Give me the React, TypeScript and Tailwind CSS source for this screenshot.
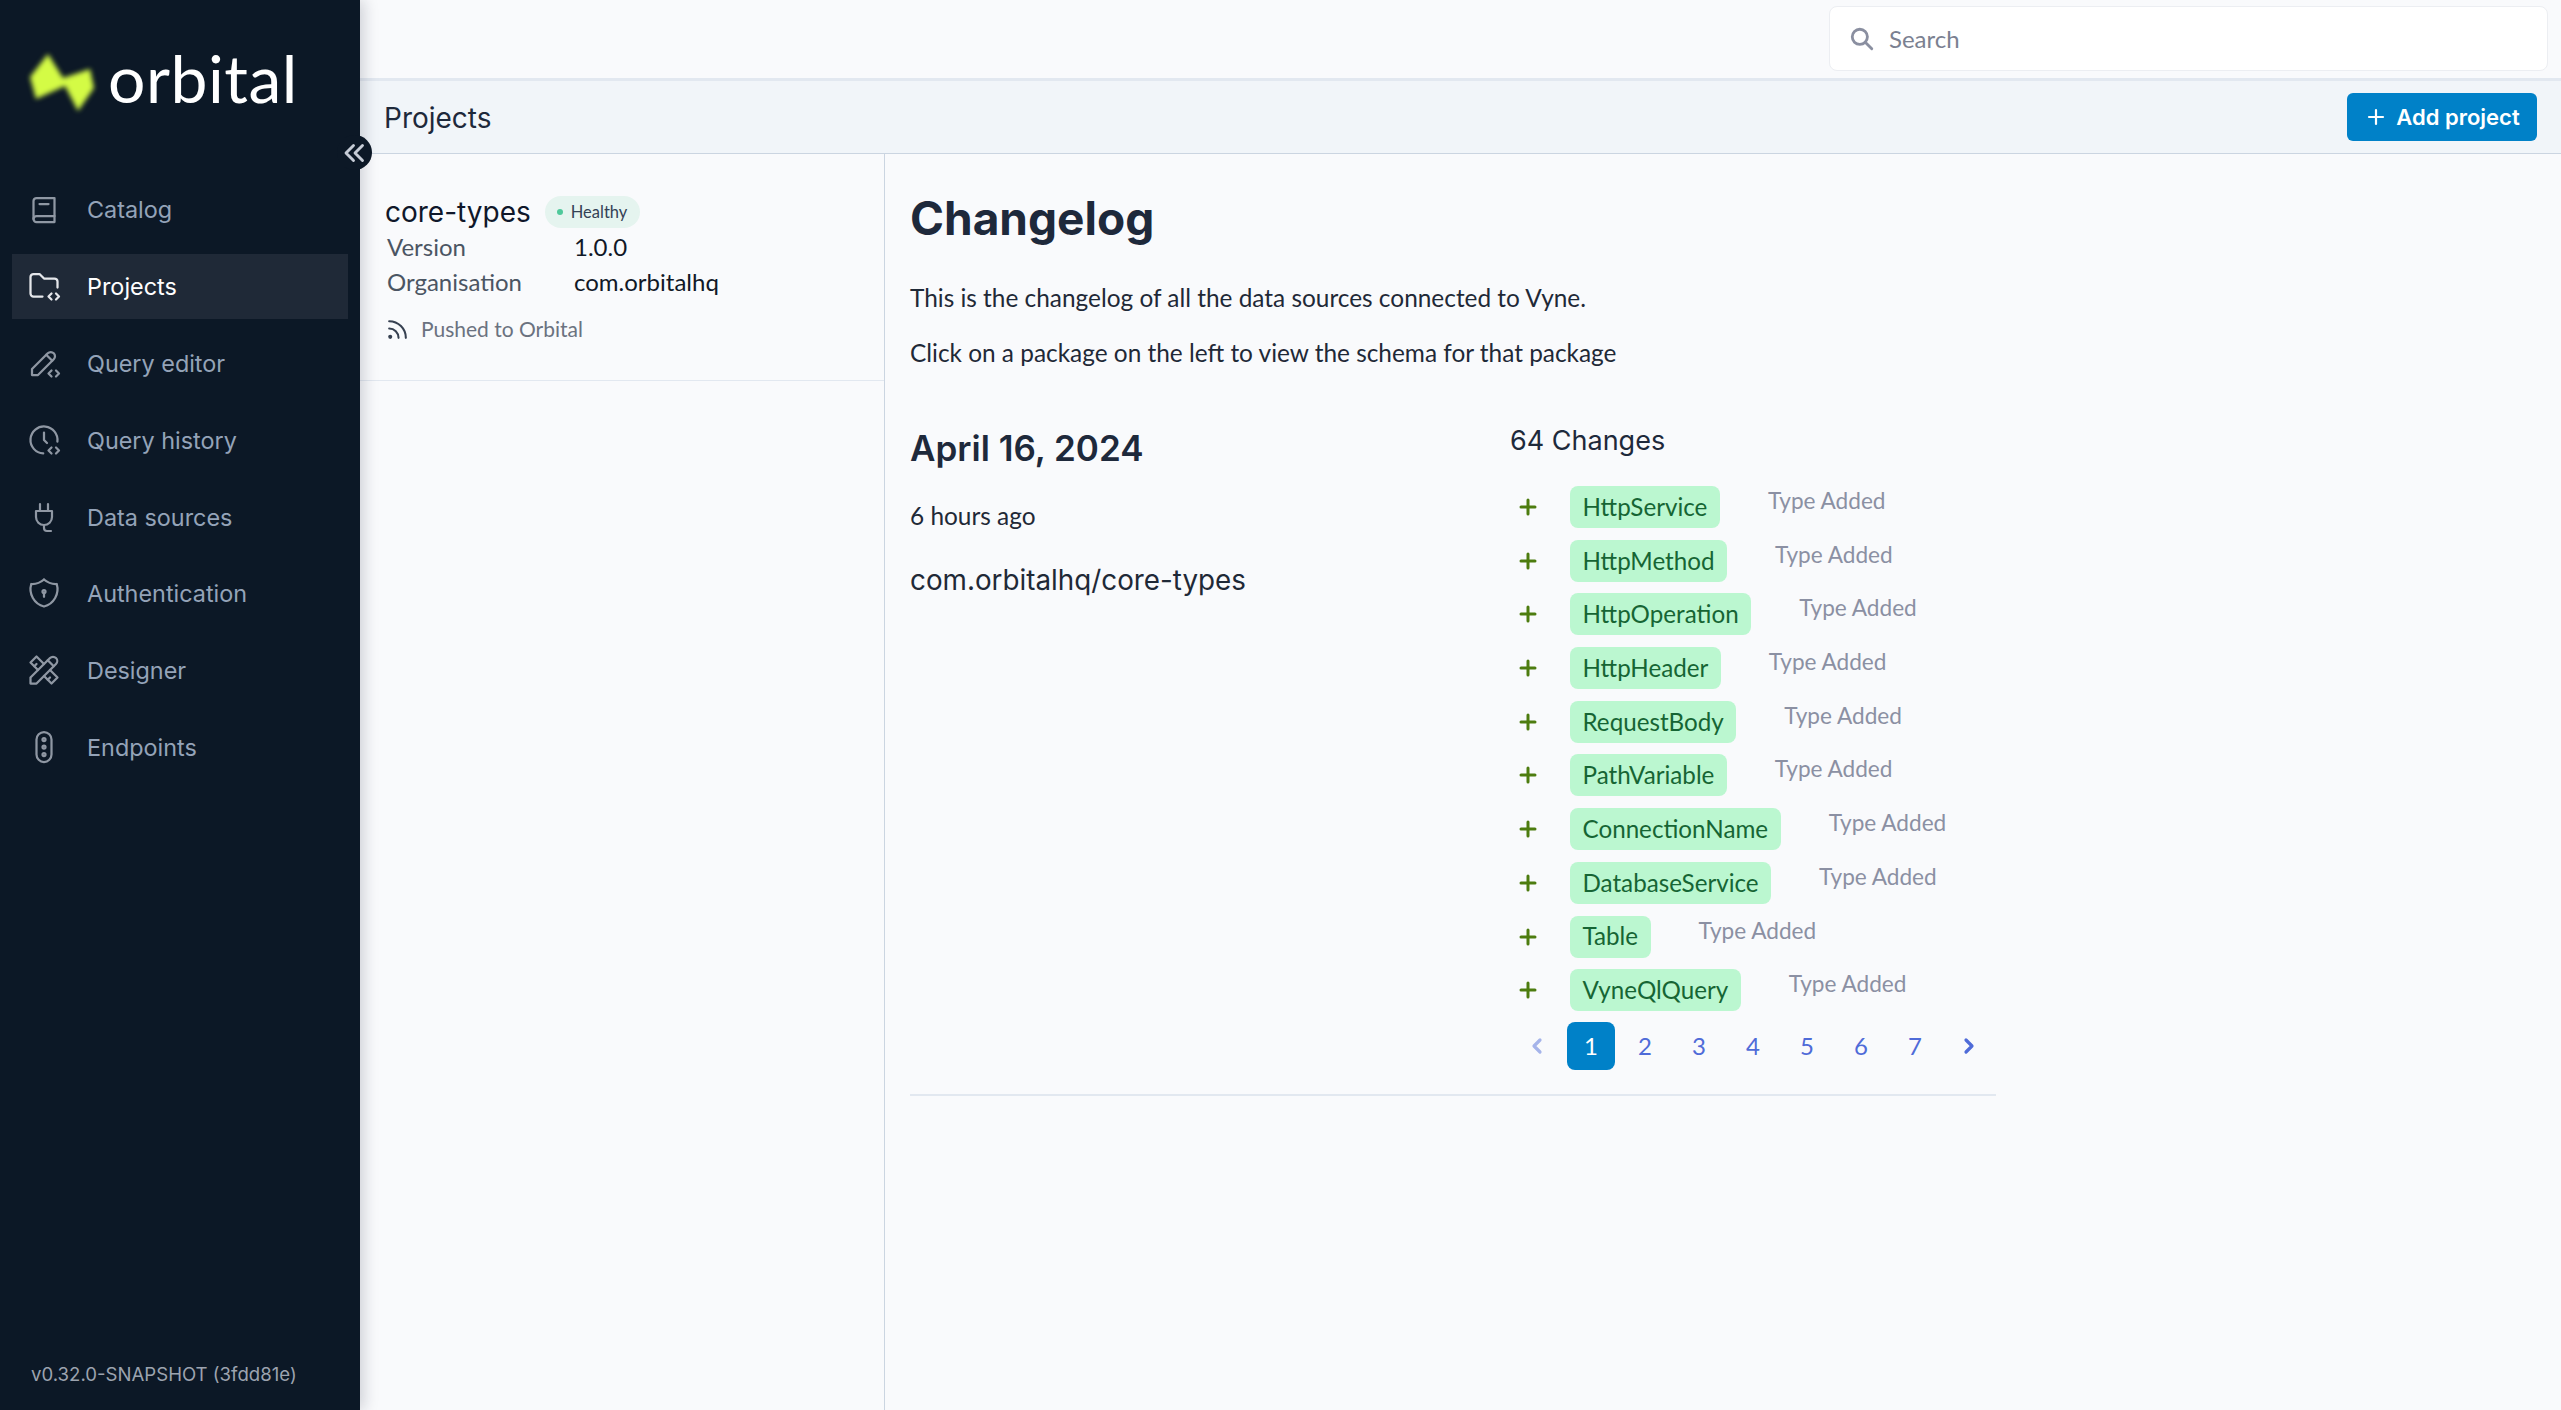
import { ReactNode } from "react";
import {
  TbBook2,
  TbChevronLeft,
  TbChevronRight,
  TbChevronsLeft,
  TbClockCode,
  TbFolderCode,
  TbPencilCode,
  TbPlus,
  TbRss,
  TbSearch,
  TbShieldLock,
  TbTools,
  TbTrafficLights,
} from "react-icons/tb";

const HEADING = "font-['Inter',sans-serif]";

// vertical plug with a hooked cord, not in the icon set
function PlugIcon() {
  return (
    <svg viewBox="0 0 36 36" className="h-9 w-9" fill="none" stroke="currentColor" strokeWidth="2.2" strokeLinecap="round" strokeLinejoin="round">
      <path d="M14 5v7M22 5v7" />
      <path d="M10 12h16v6a8 8 0 0 1-16 0z" />
      <path d="M18 26v3a3 3 0 0 0 3 3h4" />
    </svg>
  );
}

function Logo() {
  return (
    <div className="flex items-center pl-[27px] pt-[50px]">
      <svg viewBox="0 0 72 66" className="h-[66px] w-[72px] blur-[2.5px]">
        <polygon points="21,4 36,28 63,19 67,38 51,61 38,36 9,49 3,27" fill="#d4fb45" />
      </svg>
      <span className="ml-[9px] -mt-[10px] font-['Lato',sans-serif] text-[66px] font-normal leading-none tracking-[0.5px] text-white">orbital</span>
    </div>
  );
}

const NAV: { label: string; icon: ReactNode; active?: boolean }[] = [
  { label: "Catalog", icon: <TbBook2 size={36} strokeWidth={1.5} /> },
  { label: "Projects", icon: <TbFolderCode size={36} strokeWidth={1.5} />, active: true },
  { label: "Query editor", icon: <TbPencilCode size={36} strokeWidth={1.5} /> },
  { label: "Query history", icon: <TbClockCode size={36} strokeWidth={1.5} /> },
  { label: "Data sources", icon: <PlugIcon /> },
  { label: "Authentication", icon: <TbShieldLock size={36} strokeWidth={1.5} /> },
  { label: "Designer", icon: <TbTools size={36} strokeWidth={1.5} /> },
  { label: "Endpoints", icon: <TbTrafficLights size={36} strokeWidth={1.5} /> },
];

const CHANGES = [
  "HttpService",
  "HttpMethod",
  "HttpOperation",
  "HttpHeader",
  "RequestBody",
  "PathVariable",
  "ConnectionName",
  "DatabaseService",
  "Table",
  "VyneQlQuery",
];

function Sidebar() {
  return (
    <aside className={`relative z-10 flex h-full w-[360px] shrink-0 flex-col bg-[#0c1826] shadow-[4px_0_14px_rgba(15,23,42,0.18)] ${HEADING}`}>
      <div className="h-[177px]">
        <Logo />
      </div>
      <nav className="flex flex-col gap-[11.8px] px-3">
        {NAV.map((item) => (
          <div
            key={item.label}
            className={`flex h-[65px] items-center gap-[25px] pl-3.5 text-[23.4px] ${
              item.active ? "bg-[#1f2937] text-white" : "text-[#94a3b8]"
            }`}
          >
            <span className={item.active ? "text-[#e5e7eb]" : "text-[#8f97a3]"}>{item.icon}</span>
            <span className="pt-[1px]">{item.label}</span>
          </div>
        ))}
      </nav>
      <div className="mt-auto pb-[24px] pl-[31px] text-[18.6px] leading-[24px] text-[#9ca3af]">v0.32.0-SNAPSHOT (3fdd81e)</div>
      <button className="absolute left-[337px] top-[135px] flex h-[35px] w-[35px] items-center justify-center rounded-full bg-[#0c1826] text-[#c6ccd6]">
        <TbChevronsLeft size={36} strokeWidth={1.9} className="shrink-0" />
      </button>
    </aside>
  );
}

function ProjectCard() {
  return (
    <div className="h-[227px] border-b border-[#e2e8f0] pl-[25px] pt-[42px]">
      <div className="flex items-center gap-[14px]">
        <span className={`${HEADING} text-[28px] leading-[32px] text-[#0f172a]`}>core-types</span>
        <span className="flex h-8 w-[95px] items-center gap-[8px] rounded-full bg-[#e5f4ef] pl-[12px] text-[16.5px] text-[#334155]">
          <span className="h-[6px] w-[6px] rounded-full bg-[#4fc99b]" />
          Healthy
        </span>
      </div>
      <div className="mt-[1px] grid grid-cols-[187px_1fr] pl-[2px] text-[24px] leading-[35px]">
        <span className="text-[#4b5563]">Version</span>
        <span className="text-[#111827]">1.0.0</span>
        <span className="text-[#4b5563]">Organisation</span>
        <span className="text-[#111827]">com.orbitalhq</span>
      </div>
      <div className="mt-[14px] flex items-center gap-[11px] text-[21px] leading-[32px] text-[#6b7280]">
        <TbRss size={25} strokeWidth={2} className="text-[#374151]" />
        Pushed to Orbital
      </div>
    </div>
  );
}

function ChangeRow({ name }: { name: string }) {
  return (
    <div className="flex items-start">
      <span className="flex h-[42px] w-[60px] items-center pl-[6px] text-[#4d7c0f]">
        <TbPlus size={24} strokeWidth={3} />
      </span>
      <span className="flex h-[42px] items-center rounded-lg bg-[#bbf7d0] px-[12.5px] text-[24.2px] text-[#166534]">{name}</span>
      <span className="ml-[48px] text-[22.6px] leading-[30px] text-[#8b90a3]">Type Added</span>
    </div>
  );
}

function Pagination() {
  return (
    <div className="mt-[11px] flex items-center text-[24px] text-[#4f6bd8]">
      <span className="flex h-12 w-[54px] items-center justify-center text-[#a5b4ea]">
        <TbChevronLeft size={24} strokeWidth={3.2} />
      </span>
      {[1, 2, 3, 4, 5, 6, 7].map((n) => (
        <span key={n} className="flex w-[54px] justify-center">
          <span className={`flex h-12 w-12 items-center justify-center rounded-lg ${n === 1 ? "bg-[#0081c8] text-white" : ""}`}>{n}</span>
        </span>
      ))}
      <span className="flex h-12 w-[54px] items-center justify-center">
        <TbChevronRight size={24} strokeWidth={3.2} />
      </span>
    </div>
  );
}

function Changelog() {
  return (
    <main className="min-w-0 flex-1 pl-[25px] pt-[32px]">
      <div className="w-[1086px]">
        <h1 className={`${HEADING} text-[46px] font-bold leading-[64px] text-[#1e293b]`}>Changelog</h1>
        <p className="mt-[32px] text-[24.4px] leading-[32px] text-[#1f2937]">This is the changelog of all the data sources connected to Vyne.</p>
        <p className="mt-[23px] text-[24.4px] leading-[32px] text-[#1f2937]">Click on a package on the left to view the schema for that package</p>
        <div className="mt-[46px] flex border-b-2 border-[#e2e8f0] pb-[24px]">
          <div className="w-[600px] shrink-0 pt-[11px]">
            <h2 className={`${HEADING} text-[35px] font-semibold leading-[44px] text-[#1e293b]`}>April 16, 2024</h2>
            <div className="mt-[30px] text-[24.4px] leading-[32px] text-[#1f2937]">6 hours ago</div>
            <div className={`${HEADING} mt-[30px] text-[27.8px] leading-[36px] text-[#1f2937]`}>com.orbitalhq/core-types</div>
          </div>
          <div className="flex-1 pt-[8px]">
            <div className={`${HEADING} text-[27px] leading-[36px] text-[#1e293b]`}>64 Changes</div>
            <div className="mt-[27px] flex flex-col gap-[11.7px]">
              {CHANGES.map((c) => (
                <ChangeRow key={c} name={c} />
              ))}
            </div>
            <Pagination />
          </div>
        </div>
      </div>
    </main>
  );
}

export default function App() {
  return (
    <div className="flex h-screen overflow-hidden bg-[#f9fafc] font-['Lato',sans-serif]">
      <Sidebar />
      <div className="flex min-w-0 flex-1 flex-col">
        <header className="flex h-[81px] shrink-0 justify-end border-b-[3px] border-[#e2e8f0] pr-[13px] pt-[6px]">
          <div className="flex h-[65px] w-[719px] items-center gap-[14px] rounded-lg border border-[#eceef2] bg-white pl-[19px] text-[24px] text-[#7b8191]">
            <TbSearch size={26} strokeWidth={2.6} className="text-[#8a8fa0]" />
            Search
          </div>
        </header>
        <div className="flex h-[73px] shrink-0 items-center justify-between border-b border-[#cbd5e1] bg-[#f1f5f9] pl-[24px] pr-[24px]">
          <span className={`${HEADING} pt-[1px] text-[28px] text-[#1e293b]`}>Projects</span>
          <button className={`${HEADING} flex h-12 w-[190px] items-center justify-center gap-[8px] rounded-md bg-[#0081c8] text-[22px] font-semibold text-white`}>
            <TbPlus size={24} strokeWidth={2.2} />
            Add project
          </button>
        </div>
        <div className="flex min-h-0 flex-1">
          <section className="w-[525px] shrink-0 border-r border-[#cbd5e1]">
            <ProjectCard />
          </section>
          <Changelog />
        </div>
      </div>
    </div>
  );
}
